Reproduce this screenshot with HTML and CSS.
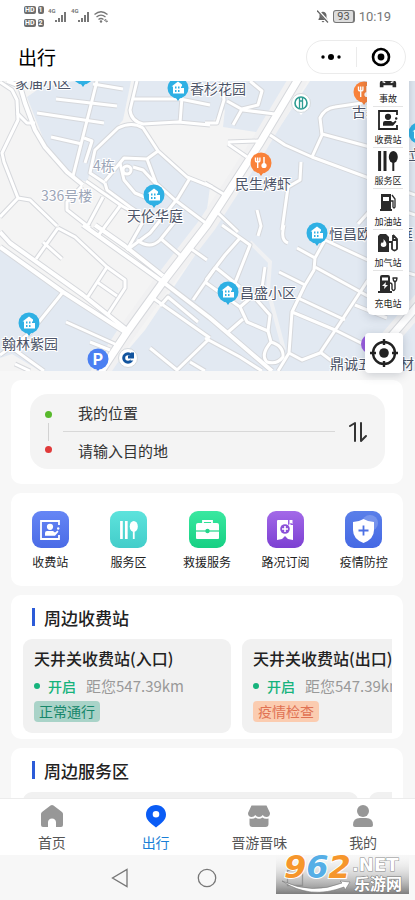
FILE: index.html
```html
<!DOCTYPE html>
<html lang="zh-CN">
<head>
    <meta charset="utf-8">
    <meta name="viewport" content="width=device-width, initial-scale=1">
    <title>出行</title>
    <link rel="stylesheet" href="styles.css">
</head>
<body>
    <!-- shared symbols -->
    <svg class="sprite" aria-hidden="true">
        <defs>
            <symbol id="icon-toll" viewBox="0 0 20 20">
                <path d="M19 5V1H1v18h18v-4" fill="none" stroke="currentColor" stroke-width="1.8"/>
                <circle cx="10" cy="6.8" r="3.1" fill="currentColor"/>
                <path d="M5 15.8V13q0-2 2-2h6l2 1.500 2.500-2 1 1.200-3.500 4.100z" fill="currentColor"/>
                <circle cx="18.200" cy="8.500" r="1.200" fill="currentColor"/>
            </symbol>
            <symbol id="icon-service" viewBox="0 0 20 20">
                <path d="M1.600 0v20M7 0v20" stroke="currentColor" stroke-width="3"/>
                <ellipse cx="15.300" cy="6" rx="4.500" ry="6" fill="currentColor"/>
                <path d="M15.300 9v11" stroke="currentColor" stroke-width="2"/>
            </symbol>
            <symbol id="pin-home" viewBox="0 0 22 25">
                <path d="M7 18l4 6 4-6z" fill="#2aa9df"/>
                <circle cx="11" cy="11" r="10.500" fill="#2fb0e4"/>
                <path d="M4.500 9.500L11 4.500l4 3v2h-1v7H6v-7z" fill="#fff"/>
                <path d="M14 11h3v5.500h-3z" fill="#fff"/>
                <path d="M8 9.500h1.500v2H8zM11 9.500h1.500v2H11zM8 13h1.500v2H8zM11 13h1.500v2H11z" fill="#2fb0e4"/>
            </symbol>
            <symbol id="pin-food" viewBox="0 0 22 25">
                <path d="M7 18l4 6 4-6z" fill="#f47b30"/>
                <circle cx="11" cy="11" r="10.500" fill="#f9823a"/>
                <path d="M5.500 5.500v3q0 1.500 2.200 1.500t2.200-1.500v-3M7.700 5.500V16" fill="none" stroke="#fff" stroke-width="1.400"/>
                <path d="M14 5v7" stroke="#fff" stroke-width="1.500"/>
                <circle cx="14" cy="13.500" r="2.600" fill="#fff"/>
            </symbol>
        </defs>
    </svg>

    <div class="status-bar">
        <div class="status-left">
            <div class="sim-tags">
                <span><b>HD</b><b>1</b></span>
                <span><b>HD</b><b>2</b></span>
            </div>
            <svg width="62" height="18" viewBox="0 0 62 18" fill="#777">
                <text x="0" y="6" class="net">4G</text>
                <path d="M7 13h2v2H7zM10 11h2v4h-2zM13 8h2v7h-2zM16 5h2v10h-2z"/>
                <text x="23" y="6" class="net">4G</text>
                <path d="M30 13h2v2h-2zM33 11h2v4h-2zM36 8h2v7h-2zM39 5h2v10h-2z"/>
                <g fill="none" stroke="#777" stroke-width="1.300">
                    <path d="M46.500 7.500q6.500-5.500 13 0M48.500 10q4.500-3.800 9 0M50.500 12.500q2.500-2 5 0"/>
                </g>
                <circle cx="53" cy="14.500" r="1.200"/>
                <path d="M56 13.500l2-1v2.500l2-1" fill="none" stroke="#777"/>
            </svg>
        </div>
        <div class="status-right">
            <svg width="12" height="13" viewBox="0 0 12 13">
                <path d="M1.500 10V9l1-1.500V5q.500-3 3.500-3.300Q9 2 9.500 5v2.500l1 1.500v1zM4.500 11h3l-1.500 1.500z" fill="#666"/>
                <path d="M1 .500l11 12" stroke="#fff" stroke-width="2.400"/>
                <path d="M0 .500l11 12" stroke="#666" stroke-width="1.200"/>
            </svg>
            <span class="battery">93</span>
            <time>10:19</time>
        </div>
    </div>

    <header class="top-bar">
        <h1>出行</h1>
        <div class="capsule">
            <button type="button" aria-label="更多">
                <svg width="20" height="8" viewBox="0 0 20 8"><circle cx="2" cy="4" r="1.700"/><circle cx="10" cy="4" r="3"/><circle cx="18" cy="4" r="1.700"/></svg>
            </button>
            <button type="button" aria-label="关闭">
                <svg width="20" height="20" viewBox="0 0 20 20"><circle cx="10" cy="10" r="8" fill="none" stroke="#000" stroke-width="2.600"/><circle cx="10" cy="10" r="3.400"/></svg>
            </button>
        </div>
    </header>

    <main>
        <section class="map">
            <svg class="map-canvas" viewBox="0 81 415 290" preserveAspectRatio="xMidYMid slice">
                <defs>
                    <g id="lanes">
                        <path d="M0 82L12 90L17 100L18 120L2 153L4 162L18 198L0 217M18 198L30 200L57 226"/>
                        <path d="M17 113L27 123L35 123M97 81L73 176"/>
                        <path d="M56 99L117 106M93 84L123 89M37 113L104 123M51 137L82 144M84 138L92 141L85 163"/>
                        <path d="M137 81L130 110Q131 121 143 124L178 122L210 125M134 99L180 99L210 105M182 97L180 123"/>
                        <path d="M105 183L90 173L95 150L118 128Q132 121 143 128L158 151L187 177L212 187"/>
                        <path d="M105 183L107 190L130 207L147 218M105 181L124 158L147 159L158 151"/>
                        <path d="M147 159L156 183L175 200L207 224M120 163L124 180L135 193L147 198M133 167L143 170L156 184"/>
                        <path d="M190 178L178 198L150 233L127 250M82 186L67 202L67 210L90 228M86 181L122 206L140 216"/>
                        <path d="M103 197L88 225M120 206L98 236"/>
                        <path d="M36 259L58 228M43 242L62 259M58 228L75 237L107 267L87 298"/>
                        <path d="M107 267L125 280L125 288L108 314M97 282L117 296"/>
                        <path d="M63 292L30 333L0 355M66 322L117 345M90 342L110 350M8 345L44 371M15 364L30 371"/>
                        <path d="M127 250L143 222M137 240Q150 250 160 240L180 215M160 238L180 255M190 248L207 260"/>
                        <path d="M153 298L210 338M160 306L168 297L198 322M193 300L215 268M150 348L177 370L208 340M190 362L205 371"/>
                        <path d="M222 225L250 245L235 283M240 238L225 255L206 280M215 267L240 287M265 267L262 288L240 307"/>
                        <path d="M205 282L240 307L247 322L268 331L270 315L255 298M227 333L243 319"/>
                        <path d="M268 331L271 342Q260 355 267 362Q277 365 283 357Q284 346 271 342"/>
                        <path d="M205 338L240 357L262 371M325 240L315 258L314 270L305 285L292 312L289 353L302 360L320 353L342 320L368 280M289 353L278 371"/>
                        <path d="M279 272L305 285M297 248L315 258M315 267L375 300M298 298L345 320M292 312L335 330L365 345"/>
                        <path d="M320 352L345 371M284 225Q280 240 288 243M355 305L387 318M325 240L372 262"/>
                        <path d="M270 135L285 145L312 157L415 195M312 157L322 135L320 118Q325 108 335 107L362 103M322 134L370 147L415 158"/>
                        <path d="M301 162L300 180L288 187L282 230M257 210L261 226L258 236"/>
                        <path d="M227 101L243 110L275 114M233 125L242 109L258 105L262 91L250 81M205 123L217 123L224 100L222 81"/>
                        <path d="M258 141L228 142M228 144L247 157M205 183L225 195M218 213L238 232M358 224L378 202L415 215"/>
                        <path d="M372 262L415 275M375 300L402 240"/>
                        <circle cx="127" cy="170" r="4"/>
                    </g>
                    <g id="streets">
                        <path d="M7 81L20 86L25 103L35 130L45 147L67 172L83 185"/>
                        <path d="M0 247L63 292L125 332M0 232L10 243L83 295L127 330"/>
                        <path d="M83 225L163 282L210 318L272 371M95 225L125 246L163 276"/>
                    </g>
                    <path id="avenue" d="M300 76L260 143L238 177L207 225L163 282L127 332L98 376"/>
                    <path id="ring" d="M425 297L388 340L372 376"/>
                </defs>
                <rect x="0" y="81" width="415" height="290" fill="#f4f4f4"/>
                <g fill="#e2e9f2">
                    <path d="M27 97L40 88L75 81L131 81L123 120L97 150L87 182L73 177L45 143z"/>
                    <path d="M134 81L130 113L143 124L210 124L225 109L223 127L262 133L297 81z"/>
                    <path d="M125 123L143 128L158 150L187 177L210 187L205 224L172 260L160 279L127 250L145 220L107 190L88 172L95 150z"/>
                    <path d="M310 81H415V371H110L145 330L222 215z"/>
                    <path d="M0 250L65 292L125 332L105 371H40L12 354L0 358z"/>
                </g>
                <path d="M250 242L270 262L268 290L284 350" fill="none" stroke="#f0f1f3" stroke-width="4"/>
                <use href="#avenue" class="shoulder"/>
                <use href="#ring" class="shoulder"/>
                <use href="#lanes" class="edge edge-lane"/>
                <use href="#streets" class="edge edge-street"/>
                <use href="#avenue" class="edge edge-avenue"/>
                <use href="#ring" class="edge edge-avenue"/>
                <use href="#lanes" class="road road-lane"/>
                <use href="#streets" class="road road-street"/>
                <use href="#avenue" class="road road-avenue"/>
                <use href="#ring" class="road road-avenue"/>

                <use href="#pin-home" x="72" y="63" width="22" height="25"/>
                <use href="#pin-home" x="167" y="77" width="22" height="25"/>
                <use href="#pin-home" x="143" y="184" width="22" height="25"/>
                <use href="#pin-home" x="306" y="222" width="22" height="25"/>
                <use href="#pin-home" x="217" y="281" width="22" height="25"/>
                <use href="#pin-home" x="18" y="312" width="22" height="25"/>
                <use href="#pin-home" x="408" y="122" width="22" height="25"/>
                <use href="#pin-food" x="250" y="152" width="22" height="25"/>
                <use href="#pin-food" x="353" y="81" width="22" height="25"/>
                <circle cx="371" cy="344" r="10" fill="#9a5be0"/>

                <g>
                    <path d="M297 110l4 5 4-5z" fill="#fff"/>
                    <circle cx="301" cy="103" r="9.500" fill="#fff" stroke="#d5dade"/>
                    <circle cx="301" cy="103" r="6" fill="none" stroke="#2d9c92" stroke-width="1.600"/>
                    <path d="M299.500 98v10M302.500 98v10M299 101h4" stroke="#2d9c92" stroke-width="1.300"/>
                </g>
                <g>
                    <path d="M94 366l4 5 4-5z" fill="#4476ee"/>
                    <circle cx="98" cy="359" r="10.500" fill="#4b80f2"/>
                    <text x="98" y="365" class="pin-letter">P</text>
                </g>
                <g>
                    <circle cx="128" cy="358" r="9.500" fill="#fff" stroke="#d5dade"/>
                    <circle cx="128" cy="358" r="4.300" fill="none" stroke="#12549e" stroke-width="3"/>
                    <path d="M128 355.500h3v-3h3v6h-6z" fill="#12549e"/>
                    <path d="M130.500 358.500h4v2h-4z" fill="#fff"/>
                </g>

                <g class="place">
                    <text x="15" y="88">家庙小区</text>
                    <text x="190" y="94">香杉花园</text>
                    <text x="127" y="221">天伦华庭</text>
                    <text x="235" y="189">民生烤虾</text>
                    <text x="352" y="117">古寨</text>
                    <text x="329" y="239">恒昌欧洲花庭</text>
                    <text x="240" y="298">昌盛小区</text>
                    <text x="2" y="349">翰林紫园</text>
                    <text x="330" y="369">鼎诚五金建材</text>
                    <text x="408" y="160">立</text>
                </g>
                <g class="place place-faint">
                    <text x="93" y="171">4栋</text>
                    <text x="41" y="201">336号楼</text>
                </g>
            </svg>

            <div class="map-overlay">
                <div class="layers">
                    <button type="button">
                        <svg viewBox="0 0 22 20"><path d="M4 9l2-5h10l2 5 3-1v3l-2 1 1 2v5h-4v-2H6v2H2v-5l1-2-2-1V8z"/><path d="M5 13l3 1M17 13l-3 1" stroke="#fff" stroke-width="1.500"/></svg>
                        事故
                    </button>
                    <button type="button"><svg><use href="#icon-toll"/></svg>收费站</button>
                    <button type="button"><svg><use href="#icon-service"/></svg>服务区</button>
                    <button type="button">
                        <svg viewBox="0 0 20 20"><path d="M3 2h10v15H3zM2 17h12v2H2z"/><path d="M5 5h6v4H5z" fill="#fff"/><path d="M13 9h2v6q1 2 2 0V7l-3-4" fill="none" stroke="#2b2b2b" stroke-width="1.300"/></svg>
                        加油站
                    </button>
                    <button type="button">
                        <svg viewBox="0 0 20 20"><path d="M0 3l2-2h6l3 3v15H0z"/><path d="M5.500 6q4 4 2.500 7-2.500 2-5 0-1-2 1-4 .500 1 1 1 1-2 .500-4z" fill="#fff"/><path d="M11 9h3v7q2.500 3 5 0V6l-4-4M15 2v5h4" fill="none" stroke="#2b2b2b" stroke-width="1.800"/></svg>
                        加气站
                    </button>
                    <button type="button">
                        <svg viewBox="0 0 20 20"><path d="M2 3q0-2 2-2h6q2 0 2 2v14H2zM0 17h14v2H0z"/><path d="M4 3.500h6v3H4zM8 8l-4 4h2.500L6 15l4-4H7.500z" fill="#fff"/><path d="M12 9q2 0 2 2v4q1.500 3 3 0V8q-2-1-2-4m2 4q2-1 2-4M14.500 4h5" fill="none" stroke="#2b2b2b" stroke-width="1.400"/></svg>
                        充电站
                    </button>
                </div>
            </div>
            <button type="button" class="locate" aria-label="定位">
                <svg width="28" height="28" viewBox="0 0 28 28">
                    <circle cx="14" cy="14" r="11" fill="none" stroke="#222" stroke-width="2.400"/>
                    <circle cx="14" cy="14" r="4.800" fill="#222"/>
                    <path d="M14 0v6M14 22v6M0 14h6M22 14h6" stroke="#222" stroke-width="2.400"/>
                </svg>
            </button>
        </section>

        <form class="card route">
            <div class="route-box">
                <div class="route-marks"><i class="dot dot-from"></i><i class="link"></i><i class="dot dot-to"></i></div>
                <div class="route-fields">
                    <input type="text" aria-label="起点" value="我的位置">
                    <input type="text" aria-label="目的地" placeholder="请输入目的地">
                </div>
                <button type="button" class="swap" aria-label="交换起点和终点">
                    <svg width="20" height="22" viewBox="0 0 20 22" fill="none" stroke="#333" stroke-width="2" stroke-linecap="round" stroke-linejoin="round"><path d="M2 5l5-3v18M13 2v18l5-5"/></svg>
                </button>
            </div>
        </form>

        <nav class="card shortcuts">
            <a href="#toll"><span class="tile tile-blue"><svg width="20" height="20"><use href="#icon-toll"/></svg></span>收费站</a>
            <a href="#service"><span class="tile tile-cyan"><svg width="18" height="20"><use href="#icon-service"/></svg></span>服务区</a>
            <a href="#rescue">
                <span class="tile tile-green">
                    <svg width="25" height="22" viewBox="0 0 25 22"><path d="M8 5V2h9v3" fill="none" stroke="#fff" stroke-width="1.800"/><path d="M1 6q0-2 2-2h19q2 0 2 2v13q0 1-1 1H2q-1 0-1-1z" fill="#fff"/><path d="M1 12h23" stroke="#23d68b" stroke-width="1.200"/><circle cx="12.500" cy="12" r="2.200" fill="#23d68b"/></svg>
                </span>救援服务
            </a>
            <a href="#subscribe">
                <span class="tile tile-purple">
                    <svg width="20" height="22" viewBox="0 0 20 22"><path d="M2 2q0-1 1-1h10v5l2-1 1 1h2v15l-5-1-3-3-3 3-5 1z" fill="#fff"/><path d="M14.500 1h3v4l-1.500-1-1.500 1z" fill="#fff"/><circle cx="10" cy="10" r="4.800" fill="#8b50d8"/><path d="M10 7v6M7 10h6" stroke="#fff" stroke-width="1.600"/></svg>
                </span>路况订阅
            </a>
            <a href="#health">
                <span class="tile tile-royal">
                    <svg width="37" height="37" viewBox="0 0 37 37"><circle cx="25" cy="12" r="8" fill="#fff" opacity=".2"/><path d="M18.500 8q5 3 10.500 3v8q0 9-10.500 13Q8 28 8 19v-8q5.500 0 10.500-3z" fill="#fff"/><path d="M18.500 14.500v10M13.500 19.500h10" stroke="#4c70e4" stroke-width="1.800"/></svg>
                </span>疫情防控
            </a>
        </nav>

        <section class="card nearby">
            <h2>周边收费站</h2>
            <div class="scroller">
                <article class="station">
                    <h3>天井关收费站(入口)</h3>
                    <p><span class="open">开启</span><span class="distance">距您547.39km</span></p>
                    <span class="tag tag-ok">正常通行</span>
                </article>
                <article class="station">
                    <h3>天井关收费站(出口)</h3>
                    <p><span class="open">开启</span><span class="distance">距您547.39km</span></p>
                    <span class="tag tag-check">疫情检查</span>
                </article>
            </div>
        </section>

        <section class="card nearby">
            <h2>周边服务区</h2>
            <div class="scroller">
                <article class="station station-wide"></article>
                <article class="station station-wide"></article>
            </div>
        </section>
    </main>

    <nav class="tab-bar">
        <a href="#home"><svg width="24" height="24" viewBox="0 0 24 24"><path d="M10.500 1.600q1.500-1 3 0L22 8q1 .800 1 2v11q0 2-2 2h-5v-5q-.500-3.500-4-3.500T8 18v5H3q-2 0-2-2V10q0-1.200 1-2z"/></svg>首页</a>
        <a href="#travel" class="active"><svg width="24" height="24" viewBox="0 0 24 24"><path fill-rule="evenodd" d="M12 1C6.500 1 2 5 2 10.500S6 18.500 12 23.500C18 18.500 22 16 22 10.500S17.500 1 12 1zm0 6a3.300 3.300 0 1 0 0 6.600A3.300 3.300 0 0 0 12 7z"/></svg>出行</a>
        <a href="#shop"><svg width="24" height="24" viewBox="0 0 24 24"><path d="M4.500 1.500h15L23 9q0 4-3.700 4-2.300 0-3.600-2-1.300 2-3.700 2t-3.700-2Q7 13 4.700 13 1 13 1 9z"/><path d="M2.500 14.500q4 1 6-1 3.500 2.500 7 0 2 2 6 1V20q0 3-3 3h-13q-3 0-3-3z"/></svg>晋游晋味</a>
        <a href="#me"><svg width="24" height="24" viewBox="0 0 24 24"><circle cx="12" cy="7" r="6"/><path d="M2 21q0-7 7-7h6q7 0 7 7 0 2-2 2H4q-2 0-2-2z"/></svg>我的</a>
    </nav>

    <footer class="system-nav">
        <button type="button" aria-label="返回"><svg width="20" height="20" viewBox="0 0 20 20"><path d="M17 1.500v17L2.500 10z"/></svg></button>
        <button type="button" aria-label="主屏幕"><svg width="20" height="20" viewBox="0 0 20 20"><circle cx="10" cy="10" r="8.700"/></svg></button>
        <button type="button" aria-label="最近任务"><svg width="20" height="20" viewBox="0 0 20 20"><path d="M2.500 2.500h15v15h-15z"/></svg></button>
        <svg class="site-mark" width="133" height="42" viewBox="0 0 133 42">
            <defs>
                <linearGradient id="mark-bg" x2="0" y2="1"><stop offset="0" stop-color="#fff" stop-opacity="0"/><stop offset="1" stop-color="#7d7d7d"/></linearGradient>
            </defs>
            <rect width="133" height="42" fill="url(#mark-bg)"/>
            <text x="8" y="26" class="mark-num"><tspan fill="#f6962c">9</tspan><tspan fill="#55aee6">6</tspan><tspan fill="#f6962c">2</tspan></text>
            <path d="M6 29q30 14 60 2l-2-2 10 1-5 8-1-3Q34 48 6 29z" fill="#fff" stroke="#777" stroke-width=".6"/>
            <text x="76" y="19" class="mark-net">.NET</text>
            <text x="78" y="38" class="mark-cn">乐游网</text>
        </svg>
    </footer>
</body>
</html>
```
FILE: styles.css
```css
* {
    box-sizing: border-box;
}
html, body {
    margin: 0;
    padding: 0;
}
body {
    height: 100vh;
    display: flex;
    flex-direction: column;
    background: #f7f7f7;
    color: #222;
    font-family: "Noto Sans CJK SC", "Noto Sans", sans-serif;
    font-size: 14px;
}
h1, h2, h3, p {
    margin: 0;
}
button {
    padding: 0;
    border: 0;
    background: none;
    color: inherit;
    font-family: inherit;
}
a {
    color: inherit;
    text-decoration: none;
}
svg {
    display: block;
}
.sprite {
    position: absolute;
    width: 0;
    height: 0;
}

/* status bar */
.status-bar {
    flex: none;
    height: 32px;
    padding: 0 24px;
    display: flex;
    justify-content: space-between;
    align-items: center;
    background: #fff;
    color: #777;
    font-family: Roboto, sans-serif;
}
.status-left, .status-right {
    display: flex;
    align-items: center;
    gap: 4px;
}
.sim-tags {
    display: flex;
    flex-direction: column;
    gap: 5px;
}
.sim-tags span {
    display: flex;
    gap: 2px;
}
.sim-tags b {
    padding: 0 1px;
    border-radius: 2px;
    background: #6e6e6e;
    color: #fff;
    font-size: 7px;
    line-height: 8px;
}
.net {
    font-size: 6px;
    font-weight: bold;
}
.battery {
    padding: 0 3px;
    border: 1px solid #777;
    border-right-width: 2px;
    border-radius: 3px;
    background: #ddd;
    color: #555;
    font-size: 11px;
    line-height: 11px;
}
.status-right time {
    font-size: 13px;
}

/* page header */
.top-bar {
    flex: none;
    height: 49px;
    padding: 0 9px 0 18px;
    display: flex;
    justify-content: space-between;
    align-items: center;
    background: #fff;
}
.top-bar h1 {
    color: #000;
    font-size: 19px;
    font-weight: 400;
    line-height: 24px;
}
.capsule {
    width: 100px;
    height: 34px;
    display: flex;
    align-items: center;
    border: 1px solid #ebebeb;
    border-radius: 17px;
}
.capsule button {
    flex: 1;
    height: 20px;
    display: flex;
    align-items: center;
    justify-content: center;
}
.capsule button + button {
    border-left: 1px solid #ebebeb;
}

main {
    flex: 1;
    min-height: 0;
    overflow: hidden;
}

/* map */
.map {
    position: relative;
    height: 290px;
}
.map-canvas {
    width: 100%;
    height: 100%;
}
.shoulder, .edge, .road {
    fill: none;
    stroke-linejoin: round;
}
.shoulder {
    stroke: #f1f1f2;
    stroke-width: 18px;
}
.edge {
    stroke: #d6d8dc;
}
.road {
    stroke: #fff;
}
.edge-lane {
    stroke-width: 5px;
}
.road-lane {
    stroke-width: 3px;
}
.edge-street {
    stroke-width: 6px;
}
.road-street {
    stroke-width: 4px;
}
.edge-avenue {
    stroke-width: 9px;
}
.road-avenue {
    stroke-width: 7px;
}
.place {
    fill: #4c5468;
    stroke: #fff;
    stroke-width: 2px;
    paint-order: stroke;
    font-size: 14px;
}
.place-faint {
    fill: #9ca6b8;
}
.pin-letter {
    fill: #fff;
    font: bold 16px Roboto, sans-serif;
    text-anchor: middle;
}
.map-overlay {
    position: absolute;
    inset: 0;
    overflow: hidden;
    pointer-events: none;
}
.layers {
    position: absolute;
    right: 6px;
    bottom: 56px;
    width: 42px;
    padding: 0 6px 3px;
    display: flex;
    flex-direction: column;
    border-radius: 6px;
    background: #fff;
    box-shadow: 0 2px 10px rgba(60, 70, 90, .25);
    pointer-events: auto;
}
.layers button {
    height: 41px;
    padding-top: 3px;
    display: flex;
    flex-direction: column;
    align-items: center;
    gap: 3px;
    border-bottom: 1px solid #e4e4e4;
    color: #222;
    font-size: 9px;
    line-height: 13px;
    white-space: nowrap;
}
.layers button:last-child {
    border-bottom: 0;
}
.layers svg {
    width: 20px;
    height: 20px;
    fill: #2b2b2b;
}
.locate {
    position: absolute;
    right: 12px;
    bottom: -2px;
    width: 38px;
    height: 40px;
    display: flex;
    align-items: center;
    justify-content: center;
    border-radius: 4px;
    background: #fff;
    box-shadow: 0 2px 10px rgba(60, 70, 90, .25);
}

.card {
    margin: 9px 12px 0 11px;
    border-radius: 10px;
    background: #fff;
}

/* route search */
.route {
    padding: 14px 18px 15px 19px;
}
.route-box {
    height: 75px;
    padding: 0 17px 0 15px;
    display: flex;
    align-items: center;
    border-radius: 18px;
    background: #f4f4f4;
}
.route-marks {
    display: flex;
    flex-direction: column;
    align-items: center;
    gap: 5px;
    margin-right: 11px;
}
.dot {
    width: 7px;
    height: 7px;
    border-radius: 50%;
}
.dot-from {
    background: #58b92c;
}
.dot-to {
    background: #e03a3a;
}
.link {
    width: 1px;
    height: 18px;
    background: #d2d2d2;
}
.route-fields {
    flex: 1;
    min-width: 0;
}
.route-fields input {
    width: 100%;
    height: 37px;
    padding: 0 15px;
    display: block;
    border: 0;
    background: none;
    color: #333;
    font-family: inherit;
    font-size: 15px;
    outline: 0;
}
.route-fields input:first-child {
    border-bottom: 1px solid #d8d8d8;
}
.route-fields input::placeholder {
    color: #333;
    opacity: 1;
}
.swap {
    margin-left: 13px;
}

/* shortcuts */
.shortcuts {
    padding: 18px 0 15px;
    display: flex;
}
.shortcuts a {
    flex: 1;
    display: flex;
    flex-direction: column;
    align-items: center;
    gap: 5px;
    font-size: 12px;
    line-height: 18px;
}
.tile {
    width: 37px;
    height: 37px;
    display: flex;
    align-items: center;
    justify-content: center;
    border-radius: 9px;
    color: #fff;
}
.tile-blue {
    background: linear-gradient(#6686f5, #4a6be6);
}
.tile-cyan {
    background: linear-gradient(#5de3dc, #43cdca);
}
.tile-green {
    background: linear-gradient(#3ae8a0, #16d083);
}
.tile-purple {
    background: linear-gradient(#a369e8, #7c40d2);
}
.tile-royal {
    background: linear-gradient(#5a7fe9, #4569e4);
}

/* nearby lists */
.nearby {
    padding: 0 11px 6px 12px;
}
.nearby h2 {
    height: 44px;
    padding-left: 9px;
    display: flex;
    align-items: center;
    gap: 9px;
    font-size: 17px;
    font-weight: 500;
}
.nearby h2::before {
    content: "";
    width: 3px;
    height: 18px;
    background: #2c5bd8;
}
.scroller {
    display: flex;
    gap: 11px;
    overflow: hidden;
}
.station {
    flex: none;
    width: 208px;
    height: 94px;
    padding: 7px 11px;
    border-radius: 9px;
    background: #f1f1f1;
}
.station-wide {
    width: 335px;
}
.station h3 {
    font-size: 16px;
    font-weight: 500;
    line-height: 24px;
    white-space: nowrap;
}
.station p {
    margin: 5px 0 4px;
    display: flex;
    align-items: center;
    line-height: 22px;
    white-space: nowrap;
}
.open {
    display: flex;
    align-items: center;
    gap: 8px;
    color: #16b37c;
    font-weight: 500;
}
.open::before {
    content: "";
    width: 6px;
    height: 6px;
    border-radius: 50%;
    background: #16b37c;
}
.distance {
    margin-left: 10px;
    color: #999;
    font-size: 15px;
}
.tag {
    padding: 0 5px;
    display: inline-block;
    border-radius: 4px;
    line-height: 21px;
}
.tag-ok {
    background: #a9d3c8;
    color: #16866a;
}
.tag-check {
    background: #fbccb0;
    color: #e07253;
}

/* bottom tabs */
.tab-bar {
    flex: none;
    height: 57px;
    padding-top: 5px;
    display: flex;
    border-top: 1px solid #ececec;
    background: #fff;
    z-index: 1;
}
.tab-bar a {
    flex: 1;
    display: flex;
    flex-direction: column;
    align-items: center;
    gap: 4px;
    color: #555;
    line-height: 20px;
}
.tab-bar svg {
    fill: #979797;
}
.tab-bar .active {
    color: #1b7fd6;
}
.tab-bar .active svg {
    fill: #0a5cf5;
}

.system-nav {
    position: relative;
    flex: none;
    height: 45px;
    padding: 0 76px;
    display: flex;
    justify-content: space-around;
    align-items: center;
    background: #f7f7f7;
    z-index: 2;
}
.system-nav button svg {
    fill: none;
    stroke: #777;
    stroke-width: 1.3px;
}
.site-mark {
    position: absolute;
    right: 6px;
    bottom: 6px;
}
.mark-num {
    font: italic bold 32px "DejaVu Sans", sans-serif;
    stroke: #fff;
    stroke-width: 2px;
    paint-order: stroke;
}
.mark-net {
    fill: #fff;
    stroke: #888;
    stroke-width: 1px;
    paint-order: stroke;
    font: bold 18px "DejaVu Sans", sans-serif;
}
.mark-cn {
    fill: #fff;
    stroke: #777;
    stroke-width: 1px;
    paint-order: stroke;
    font-size: 16px;
    font-weight: bold;
}
```
